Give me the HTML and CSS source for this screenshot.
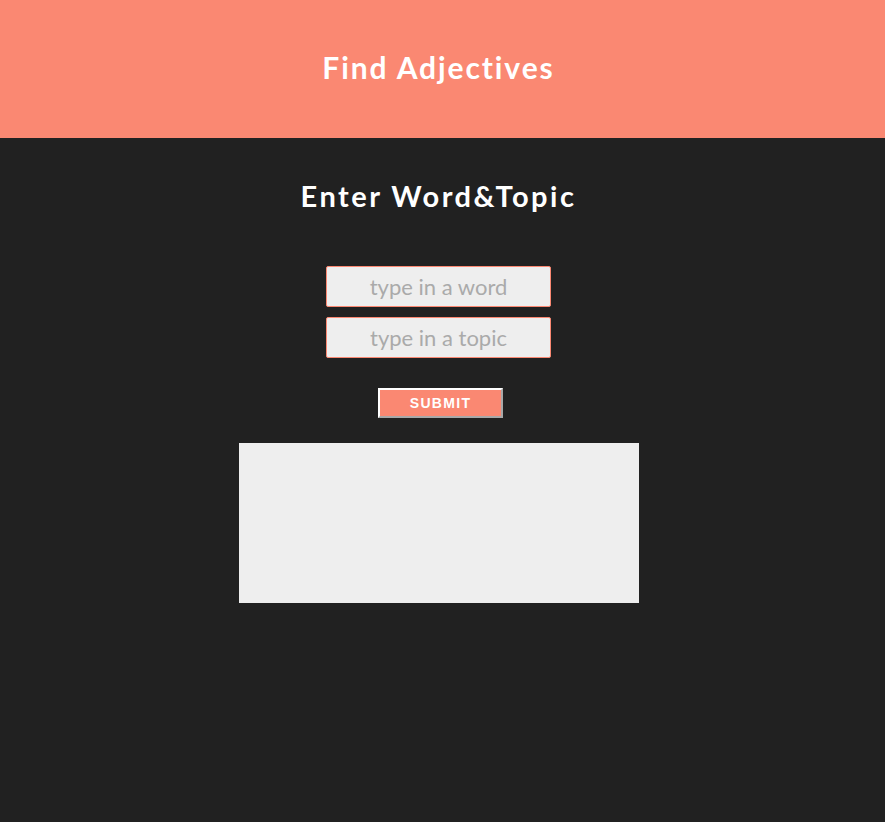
FILE: index.html
```html
<!DOCTYPE html>
<html>
<head>
<meta charset="utf-8">
<link rel="stylesheet" href="styles.css">
</head>
<body>
<header class="top">
  <h1 class="title">Find Adjectives</h1>
</header>
<main class="main">
  <h2 class="subtitle">Enter Word&amp;Topic</h2>
  <form class="form">
    <input class="field" type="text" placeholder="type in a word">
    <input class="field" type="text" placeholder="type in a topic">
    <button class="submit" type="button">SUBMIT</button>
  </form>
  <div class="output"></div>
</main>
</body>
</html>
```
FILE: styles.css
```css
html, body {
  margin: 0;
  padding: 0;
  background: #212121;
  height: 100%;
}
.top {
  box-sizing: border-box;
  background: #fa8872;
  height: 138px;
  padding-right: 8px;
  display: flex;
  align-items: center;
  justify-content: center;
}
.title {
  margin: 0;
  color: #fff;
  font-family: Lato, "Noto Sans", sans-serif;
  font-weight: 700;
  font-size: 30px;
  letter-spacing: 1.9px;
  padding-bottom: 4px;
}
.main {
  box-sizing: border-box;
  padding-right: 8px;
  display: flex;
  flex-direction: column;
  align-items: center;
}
.subtitle {
  margin: 38px 0 0;
  height: 40px;
  line-height: 40px;
  color: #fff;
  font-family: Lato, "Noto Sans", sans-serif;
  font-weight: 700;
  font-size: 29px;
  letter-spacing: 2.5px;
}
.form {
  margin-top: 50px;
  display: flex;
  flex-direction: column;
  align-items: center;
}
.field {
  box-sizing: border-box;
  width: 225px;
  height: 41px;
  margin: 0 0 10px;
  border: 1px solid #fa8872;
  border-radius: 2px;
  background: #eeeeee;
  font-family: Lato, sans-serif;
  font-size: 22px;
  text-align: center;
  color: #555;
  outline: none;
}
.field::placeholder {
  color: #aaaaaa;
}
.submit {
  box-sizing: border-box;
  margin: 20px 0 0 4px;
  width: 125px;
  height: 30px;
  background: #fa8872;
  color: #fff;
  font-family: "Liberation Sans", Arial, sans-serif;
  font-weight: 700;
  font-size: 14px;
  letter-spacing: 1.3px;
  border-style: solid;
  border-width: 2px;
  border-color: #fff #a8a8a8 #a8a8a8 #fff;
  padding: 0;
}
.output {
  margin-top: 25px;
  width: 400px;
  height: 160px;
  background: #eeeeee;
}
```
